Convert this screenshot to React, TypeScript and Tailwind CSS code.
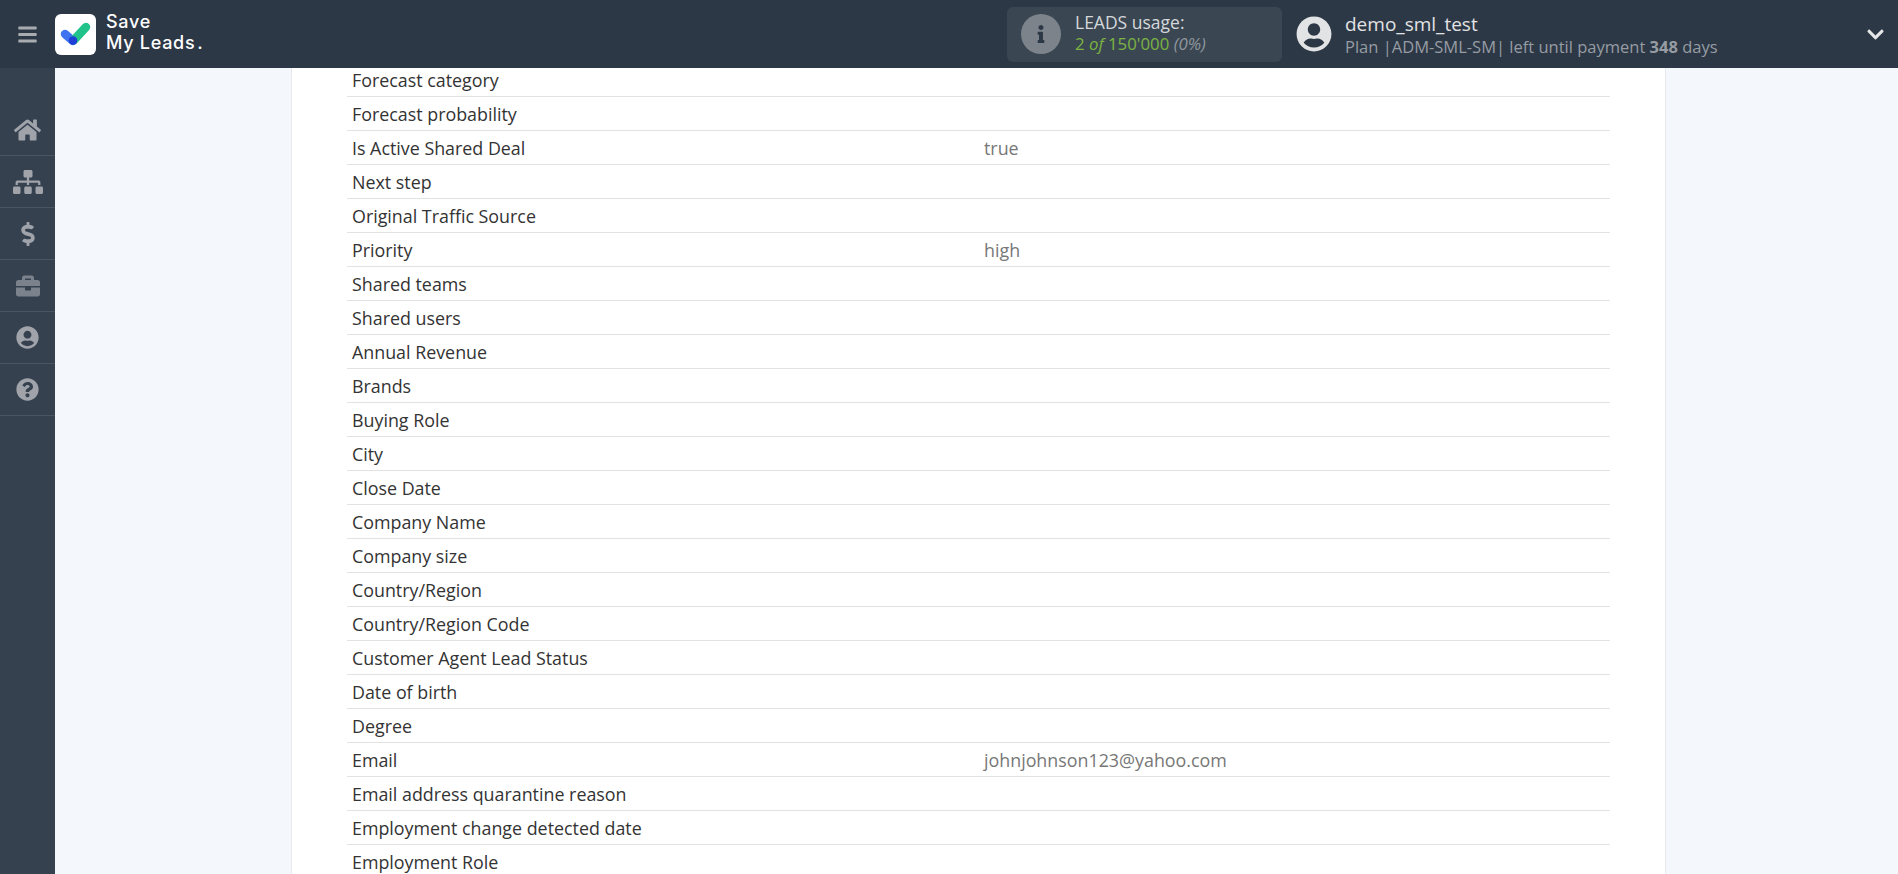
import { FaBars, FaBriefcase, FaChevronDown, FaDollarSign, FaHome, FaInfo, FaQuestionCircle, FaSitemap, FaUserCircle } from "react-icons/fa"

const rows: [string, string][] = [
  ["Forecast category", ""],
  ["Forecast probability", ""],
  ["Is Active Shared Deal", "true"],
  ["Next step", ""],
  ["Original Traffic Source", ""],
  ["Priority", "high"],
  ["Shared teams", ""],
  ["Shared users", ""],
  ["Annual Revenue", ""],
  ["Brands", ""],
  ["Buying Role", ""],
  ["City", ""],
  ["Close Date", ""],
  ["Company Name", ""],
  ["Company size", ""],
  ["Country/Region", ""],
  ["Country/Region Code", ""],
  ["Customer Agent Lead Status", ""],
  ["Date of birth", ""],
  ["Degree", ""],
  ["Email", "johnjohnson123@yahoo.com"],
  ["Email address quarantine reason", ""],
  ["Employment change detected date", ""],
  ["Employment Role", ""],
]

const menu = [
  { icon: <FaHome className="w-[27px] h-[24px]" />, tone: "text-[#a0a4aa]" },
  { icon: <FaSitemap className="w-[30px] h-[24px]" />, tone: "text-[#a0a4aa]" },
  { icon: <FaDollarSign className="w-[24px] h-[24px]" />, tone: "text-[#a0a4aa]" },
  { icon: <FaBriefcase className="w-[24px] h-[24px]" />, tone: "text-[#7b828c]" },
  { icon: <FaUserCircle className="w-[23px] h-[23px]" />, tone: "text-[#a0a4aa]" },
  { icon: <FaQuestionCircle className="w-[23px] h-[23px]" />, tone: "text-[#a0a4aa]" },
]

export default function App() {
  return (
    <div className="h-screen flex flex-col overflow-hidden bg-[#f4f7fc] font-['Open_Sans',sans-serif]">
      {/* Header */}
      <header className="relative z-10 h-[68px] shrink-0 flex items-center bg-[#2d3846]">
        <div className="w-[1007px] shrink-0 flex items-center">
          <div className="w-[55px] flex justify-center">
            <FaBars className="w-[21px] h-[21px] text-[#a8abb0]" />
          </div>
          <div className="w-[41px] h-[41px] rounded-md bg-white flex items-center justify-center">
            <svg width="32" height="26" viewBox="0 0 32 26" fill="none">
              <path d="M5 13 L13 20" stroke="#3f73f0" strokeWidth="8.5" strokeLinecap="round" />
              <path d="M14 19 L26 6" stroke="#22c38a" strokeWidth="8.5" strokeLinecap="round" />
              <circle cx="13" cy="19.5" r="4.3" fill="#1f3fd6" />
            </svg>
          </div>
          <div className="ml-[10px] -mt-[5px] text-white font-['Inter',sans-serif] font-medium text-[18px] leading-[21px] tracking-[0.7px]">
            <div>Save</div>
            <div>My Leads<span className="ml-[2px]">.</span></div>
          </div>
        </div>

        <div className="w-[275px] h-[55px] rounded-md bg-[#3a4752] flex items-center pl-[14px]">
          <div className="w-10 h-10 rounded-full bg-[#7c838b] flex items-center justify-center">
            <FaInfo className="w-[18px] h-[18px] text-[#2d3846]" />
          </div>
          <div className="ml-[14px] -mt-[2px] leading-[22px]">
            <div className="text-[17.5px] text-[#d5d8db]">LEADS usage:</div>
            <div className="text-[16.8px] text-[#7cb342]">
              2 <i>of</i> 150'000 <i className="text-[#8f969d]">(0%)</i>
            </div>
          </div>
        </div>

        <FaUserCircle className="ml-[14px] w-9 h-9 text-[#e2e3e4]" />
        <div className="ml-[13px]">
          <div className="text-[19px] leading-[24px] pt-px text-[#e2e3e4]">demo_sml_test</div>
          <div className="text-[16.5px] leading-[22px] text-[#969ca3]">
            Plan |ADM-SML-SM| left until payment <b>348</b> days
          </div>
        </div>
        <FaChevronDown className="absolute left-[1866px] top-[25px] w-[19px] h-[19px] text-[#e6e7e8]" />
      </header>

      <div className="flex-1 min-h-0 flex">
        {/* Sidebar */}
        <aside className="w-[55px] shrink-0 bg-[#364150] pt-[36px]">
          {menu.map((item, i) => (
            <div key={i} className={`h-[52px] flex items-center justify-center border-b border-[#4a5462] ${item.tone}`}>
              {item.icon}
            </div>
          ))}
        </aside>

        {/* Content */}
        <main className="flex-1 min-w-0 pl-[236px]">
          <div className="w-[1375px] min-h-full bg-white border-x border-[#e8eaf0] pl-[55px] pr-[55px]">
            <div className="-mt-[5px] w-[1263px] text-[17.85px] text-[#333333]">
              {rows.map(([label, value]) => (
                <div key={label} className="h-[34px] flex items-center px-[5px] pt-[2px] border-b border-[#e2e2e2]">
                  <div className="w-[632px] shrink-0">{label}</div>
                  <div className="text-[#777777]">{value}</div>
                </div>
              ))}
            </div>
          </div>
        </main>
      </div>
    </div>
  )
}
